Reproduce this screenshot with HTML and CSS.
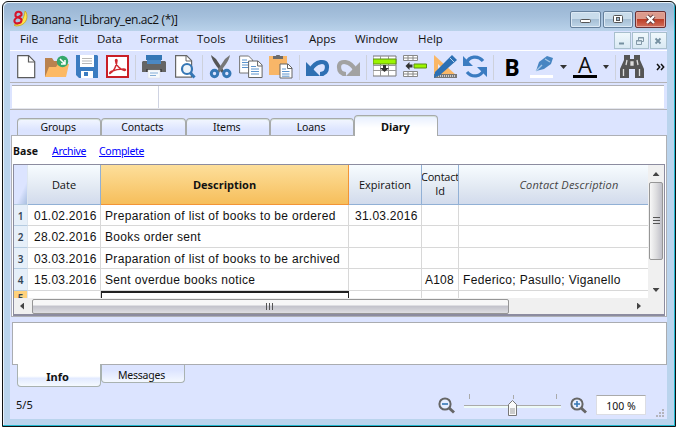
FILE: index.html
```html
<!DOCTYPE html>
<html lang="en">
<head>
<meta charset="utf-8">
<title>Banana - [Library_en.ac2 (*)]</title>
<link rel="stylesheet" href="styles.css">
</head>
<body>
<div class="window">
  <header class="titlebar">
    <svg class="logo" width="16" height="17" viewBox="0 0 16 17"><path d="M13 1l1 1c3 7-1 14-10 14l-2-1c7-1 10-6 11-14z" fill="#ffe34a" stroke="#c9a21c" stroke-width=".8"/><path d="M3.500 6c-1-6 7-5 6-1-1 2-6 2-7 5-1 5 7 4 7 0 0-3-5-2-6-4z" fill="none" stroke="#d5132b" stroke-width="2.1"/></svg>
    <span class="caption">Banana - [Library_en.ac2 (*)]</span>
    <div class="winbtns">
      <span class="wb"><svg width="29" height="15"><rect x="9.500" y="7.500" width="10" height="3" rx="1" fill="#fff" stroke="#555"/></svg></span>
      <span class="wb"><svg width="28" height="15"><rect x="9.500" y="3.500" width="9" height="7" rx="1" fill="#fff" stroke="#555"/><rect x="12.500" y="5.500" width="3" height="3" fill="#9db8cf" stroke="#555"/></svg></span>
      <span class="wb close"><svg width="29" height="15"><path d="M11 4l7 7M18 4l-7 7" stroke="#623a3a" stroke-width="4"/><path d="M11 4l7 7M18 4l-7 7" stroke="#fff" stroke-width="2.400"/></svg></span>
    </div>
  </header>
  <main class="client">
    <nav class="menubar">
      <span class="m1">File</span><span class="m2">Edit</span><span class="m3">Data</span><span class="m4">Format</span><span class="m5">Tools</span><span class="m6">Utilities1</span><span class="m7">Apps</span><span class="m8">Window</span><span class="m9">Help</span>
      <div class="mdi">
        <span><svg width="14" height="16"><path d="M4 10.500h5" stroke="#7590a0" stroke-width="2"/></svg></span>
        <span><svg width="14" height="16"><path d="M5.500 7V4.500h5v4H9M3.500 7.500h5v4h-5zM3 8h6M5 5h6" fill="none" stroke="#8399a8"/></svg></span>
        <span><svg width="14" height="16"><path d="M4.500 5.500l5 5M9.500 5.500l-5 5" stroke="#7590a0" stroke-width="1.800"/></svg></span>
      </div>
    </nav>
    <div class="toolbar">
      <svg viewBox="0 0 24 24"><path d="M2.700.7h11l6 6v16h-17z" fill="#fff" stroke="#5b5b5b" stroke-width="1.200"/><path d="M13.500 1v6h6" fill="none" stroke="#5b5b5b" stroke-width="1.200"/></svg>
      <svg viewBox="0 0 24 24"><path d="M0 3h7l2 3h11v16H0z" fill="#b9824f"/><path d="M4 12h7l2-3h11l-3 13H0z" fill="#fcb964"/><circle cx="17.500" cy="6.500" r="5.700" fill="#35a86c"/><path d="M15 4l4.500 4.500M20 5v4h-4" stroke="#fff" stroke-width="1.500" fill="none"/></svg>
      <svg viewBox="0 0 24 24"><path d="M1 0h21l1 1v22H4l-3-3z" fill="#3b7cc1"/><path d="M5 0h14v12H5z" fill="#fff"/><path d="M7 3.500h10M7 6h10M7 8.500h10" stroke="#b7b7b7"/><path d="M6 16h12v7H6z" fill="#fff"/><path d="M9 17h4v4H9z" fill="#3b7cc1"/></svg>
      <svg viewBox="0 0 24 24"><path d="M2 1h21v21H2z" fill="#fff" stroke="#c91f26" stroke-width="2"/><path d="M5 18.500c3-1 7-8 7-13 0-1.500-1.500-1.500-1.500 0 0 5 5 9 9 10 1.500 0 1.500-1.500-1-1.500-5 0-9 1-12.500 2.500-1.500 1-1.500 2.200-1 2" fill="none" stroke="#d02a30" stroke-width="1.500"/></svg>
      <i class="sep"></i>
      <svg viewBox="0 0 24 24"><path d="M4 0h16v5H4z" fill="#3577b5"/><path d="M1 6h22l1 1v10H0V7z" fill="#656565"/><path d="M5 5h14v4H5z" fill="#4b88c3"/><path d="M4 14h16v3H4z" fill="#444"/><path d="M6 15h12v8H6z" fill="#f5f9fd" stroke="#ddd" stroke-width=".5"/><path d="M8 18h8M8 20.500h6" stroke="#84add6"/></svg>
      <svg viewBox="0 0 24 24"><path d="M3.600.7h11l5 5v16.500h-16z" fill="#fff" stroke="#666" stroke-width="1.200"/><path d="M14 1v5h5" fill="none" stroke="#666"/><circle cx="15" cy="14" r="5" fill="#edf4fa" stroke="#3577b5" stroke-width="2.200"/><path d="M18.500 18l4 4.500" stroke="#3577b5" stroke-width="3"/></svg>
      <i class="sep"></i>
      <svg viewBox="0 0 24 24"><path d="M2 0l5 4 8 12-2 2C8 12 3 6 2 0z" fill="#555"/><path d="M21 0l-5 4-8 12 2 2C15 12 20 6 21 0z" fill="#777"/><circle cx="5.500" cy="18.500" r="3.200" fill="none" stroke="#3577b5" stroke-width="3"/><circle cx="17.800" cy="18.500" r="3.200" fill="none" stroke="#3577b5" stroke-width="3"/></svg>
      <svg viewBox="0 0 24 24"><path d="M.6 1h9l4 4v13H.6z" fill="#fff" stroke="#777"/><path d="M3 5h5M3 7.500h8M3 10h8M3 12.500h8" stroke="#5c94cd"/><path d="M9.600 6h9.500l4 4v12.500H9.600z" fill="#fff" stroke="#666"/><path d="M18.600 6v5H23" fill="none" stroke="#666"/><path d="M12 11.500h5M12 14h8M12 16.500h8M12 19h8" stroke="#5c94cd"/></svg>
      <svg viewBox="0 0 24 24"><path d="M0 1h18v19H0z" fill="#f8b668"/><path d="M4 1h3c0-2 4-2 4 0h3v3H4z" fill="#6b6b6b"/><path d="M11 9h8l4 4v10H11z" fill="#fff" stroke="#666"/><path d="M18.500 9v4.500H23" fill="none" stroke="#666"/><path d="M13 14h4M13 16.500h7.500M13 19h7.500M13 21.200h7.500" stroke="#5c94cd"/></svg>
      <i class="sep"></i>
      <svg viewBox="0 0 24 24"><path d="M0 7v14h14z" fill="#2f70b3"/><path d="M5 15C9 6 21 4 21 12c0 4-2 7-7 7" fill="none" stroke="#2f70b3" stroke-width="4.200"/></svg>
      <svg viewBox="0 0 24 24"><path d="M24 7v14H10z" fill="#a2a2a2"/><path d="M19 15C15 6 3 4 3 12c0 4 2 7 7 7" fill="none" stroke="#a2a2a2" stroke-width="4.200"/></svg>
      <i class="sep"></i>
      <svg viewBox="0 0 24 24"><path d="M0 1h23v20H0z" fill="#fff" stroke="#777"/><path d="M7.500 1v20M15.500 1v20M0 15.500h23M0 10.500h23" stroke="#999"/><path d="M0 4h23v5H0z" fill="#9bf500" stroke="#5c8e19"/><path d="M10 10h3v3h3l-4.500 4L7 13h3z" fill="#333"/></svg>
      <svg viewBox="0 0 24 24"><path d="M.5.500h14v5H.5zM.500 16.500h14v5H.500zM5 0v6M10 0v6M0 3h15M5 16v6M10 16v6M0 19h15" fill="#fff" stroke="#888"/><path d="M11 9h12.500v4H11z" fill="#9bf500" stroke="#5c8e19"/><path d="M2.500 11l4-4v2.500h3v3h-3V15z" fill="#333"/></svg>
      <svg viewBox="0 0 24 24"><path d="M1 0l22 20H1z" fill="#fab766"/><path d="M5 9l7 7H5z" fill="#e7e8f5"/><path d="M1 19h23v4H1z" fill="#777"/><path d="M3 21h20" stroke="#ccc" stroke-dasharray="1 1" stroke-width="2"/><path d="M19 0l5 5L7 20l-6 3 1-6z" fill="#2c70b4"/><path d="M17 3l4 4" stroke="#bcd5f0"/></svg>
      <svg viewBox="0 0 24 24"><path d="M3.500 8C6 1 15 0 20 6M20.500 15C18 22 9 23 4 17" fill="none" stroke="#3b7cc1" stroke-width="3.200"/><path d="M0 1v10h10zM24 22V12H14z" fill="#3b7cc1"/></svg>
      <i class="sep"></i>
      <b class="bold">B</b>
      <svg viewBox="0 0 24 24"><path d="M6 16l3-9 8-6 6 2-2 6-7 5z" fill="#4785c2"/><path d="M15 4l5 3M6 16l6-6" stroke="#a6c7e6" stroke-width="1.400"/><path d="M0 20h23v3H0z" fill="#fff"/></svg>
      <i class="arrow"></i>
      <span class="fontcolor">A</span>
      <i class="arrow a2"></i>
      <i class="sep"></i>
      <svg class="bino" viewBox="0 0 24 24"><path d="M4 0h6v4h4V0h6v5l4 9v9h-9v-9H9v9H0v-9l4-9z" fill="#555"/><path d="M7 5L6 10M17 5l1 5M3.500 14v7M19.500 14v7M11 7h2v3h-2z" stroke="#ddd" stroke-width="1.300" fill="#ddd"/></svg>
      <svg class="more" viewBox="0 0 9 8"><path d="M1 1l2.700 3L1 7M5 1l2.700 3L5 7" fill="none" stroke="#111" stroke-width="1.500"/></svg>
    </div>
    <div class="formula"><span></span><span></span></div>
    <div class="tabs"><span>Groups</span><span>Contacts</span><span>Items</span><span>Loans</span><span class="active">Diary</span></div>
    <section class="panel">
      <div class="views"><b>Base</b><u class="archive">Archive</u><u class="complete">Complete</u></div>
      <div class="frame">
        <div class="grid">
          <div class="row head"><i></i><span>Date</span><span class="sel">Description</span><span>Expiration</span><span class="cid">Contact<br>Id</span><span class="cdesc">Contact Description</span></div>
          <div class="row"><i>1</i><span class="date">01.02.2016</span><span>Preparation of list of books to be ordered</span><span class="date">31.03.2016</span><span></span><span></span></div>
          <div class="row"><i>2</i><span class="date">28.02.2016</span><span>Books order sent</span><span></span><span></span><span></span></div>
          <div class="row"><i>3</i><span class="date">03.03.2016</span><span>Praparation of list of books to be archived</span><span></span><span></span><span></span></div>
          <div class="row"><i>4</i><span class="date">15.03.2016</span><span>Sent overdue books notice</span><span></span><span class="acc">A108</span><span class="names">Federico; Pasullo; Viganello</span></div>
          <div class="row last"><i>5</i><span></span><span class="cursor"></span><span></span><span></span><span></span></div>
        </div>
        <div class="vscroll"><i class="up"></i><div class="thumb"><svg width="7" height="8"><path d="M0 .5h7M0 3.500h7M0 6.500h7" stroke="#555"/></svg></div><i class="down"></i></div>
        <div class="hscroll"><i class="left"></i><div class="thumb"><svg width="8" height="7"><path d="M.5 0v7M3.500 0v7M6.500 0v7" stroke="#555"/></svg></div><i class="right"></i></div>
      </div>
    </section>
    <div class="info"></div>
    <div class="btabs"><span class="on">Info</span><span>Messages</span></div>
    <footer class="status">
      <span class="count">5/5</span>
      <svg class="mag" viewBox="0 0 17 17"><path d="M10 10l6 5.500" stroke="#666" stroke-width="3"/><circle cx="7" cy="7" r="5.600" fill="#e8efff" stroke="#666" stroke-width="2"/><path d="M4 7h6" stroke="#3577b5" stroke-width="1.600"/></svg>
      <svg class="slider" width="98" height="24" viewBox="0 0 98 24"><path d="M5.500 1v5M49.500 2v4M92.500 1v5" stroke="#aaa"/><path d="M0 12.500h97" stroke="#aaa"/><path d="M0 14h97" stroke="#eefaf7" stroke-width="2"/><path d="M44.500 22.500v-11l4-4 4 4v11z" fill="#fafafa" stroke="#777"/><path d="M46 15h5v6h-5z" fill="#ccc"/></svg>
      <svg class="mag plus" viewBox="0 0 17 17"><path d="M10 10l6 5.500" stroke="#666" stroke-width="3"/><circle cx="7" cy="7" r="5.600" fill="#e8efff" stroke="#666" stroke-width="2"/><path d="M4 7h6M7 4v6" stroke="#3577b5" stroke-width="1.600"/></svg>
      <span class="pct">100 %</span>
      <svg class="grip" width="8" height="8"><path d="M6 1h2M3 4h2M6 4h2M0 7h2M3 7h2M6 7h2" stroke="#b4b4bc" stroke-width="2"/></svg>
    </footer>
  </main>
</div>
</body>
</html>
```
FILE: styles.css
```css
* { box-sizing: border-box; }
body { margin: 0; width: 676px; height: 429px; overflow: hidden; background: #fff; font: 11px "Noto Sans", sans-serif; color: #111; }
svg { display: block; flex: none; }
i { font-style: normal; }
.window { margin: 1px 0 0 2px; width: 674px; height: 426px; border: 1px solid #111; border-radius: 6px 6px 0 0; background: #bad4ed; box-shadow: inset -1px -1px #22b8cf, inset 1px 1px #e8f2fa; padding: 1px 7px 7px; }
.titlebar { height: 28px; margin: 0 -6px 0 -6px; padding: 0 8px 0 6px; display: flex; background: linear-gradient(#98b4d2, #a5c0dc 50%, #b9d2ea); border-radius: 5px 5px 0 0; }
.logo { margin: 7px 3px 0 2px; }
.caption { margin-top: 9px; font: 12px/16px "Open Sans", sans-serif; white-space: nowrap; letter-spacing: -.4px; }
.winbtns { margin: 8px 0 0 auto; display: flex; gap: 2px; height: 17px; }
.wb { border: 1px solid #65809c; border-radius: 2px; background: linear-gradient(#c9dceb 45%, #a6bfd5 50%, #bed5e8); box-shadow: inset 0 0 0 1px #dce9f5; }
.wb.close { background: linear-gradient(#dc9a8c 45%, #bd3f28 50%, #d1705c); border-color: #6b3034; box-shadow: inset 0 0 0 1px #e5a59a; }
.client { background: #dce4ff; width: 657px; height: 388px; display: flex; flex-direction: column; }
.menubar { height: 20px; border-bottom: 1px solid #fff; display: flex; padding-left: 10px; flex: none; font: 11.5px/16px "Open Sans", sans-serif; white-space: nowrap; }
.menubar > span { flex: none; letter-spacing: 0; }
.m1 { width: 38px; } .m2 { width: 39px; } .m3 { width: 43px; } .m4 { width: 57px; } .m5 { width: 48px; } .m6 { width: 64px; } .m7 { width: 46px; } .m8 { width: 63px; }
.menubar > .m6 { letter-spacing: -.2px; } .menubar > .m8 { letter-spacing: -.1px; }
.mdi { display: flex; gap: 1px; margin: 1px 0 0 auto; }
.mdi span { width: 17px; height: 17px; border: 1px solid #a8bfcd; background: linear-gradient(#f0f8fc, #d9e9f3); }
.toolbar { height: 32px; flex: none; display: flex; gap: 6px; padding: 4px 0 0 5px; border-bottom: 1px solid #b2b2b6; }
.toolbar svg { width: 24px; height: 24px; }
.sep { width: 1px; height: 25px; background: #cdd1dc; }
.bold { width: 24px; text-align: center; font: bold 23px/25px "Open Sans", sans-serif; color: #000; }
.arrow { width: 7px; height: 4px; margin-top: 10px; background: #333; clip-path: polygon(0 0, 100% 0, 50% 100%); }
.arrow.a2 { width: 6px; }
.fontcolor { width: 24px; height: 23px; border-bottom: 3px solid #000; text-align: center; font: 22px/19px "Open Sans", sans-serif; }
.toolbar .bino { margin-left: -2px; }
.toolbar .more { width: 9px; height: 8px; margin: 8px 0 0 6px; }
.formula { height: 24px; margin: 2px 3px 0 2px; border-top: 1px solid #b0b0b4; border-bottom: 1px solid #e4e6ee; display: flex; gap: 1px; background: #cfd3e2; flex: none; }
.formula span { background: #fff; width: 146px; }
.formula span + span { flex: 1; width: auto; }
.tabs { height: 26px; margin-top: 0; border-top: 1px solid #b4b4b8; display: flex; align-items: flex-end; padding-left: 7px; flex: none; }
.tabs span { width: 84.300px; height: 17px; border: 1px solid #a7aaa9; border-bottom: 0; border-radius: 4px 4px 0 0; background: linear-gradient(#f3f7ff, #dce4ff 70%); box-shadow: inset 0 1px #d4e0da; text-align: center; line-height: 17px; font-size: 10.500px; letter-spacing: -.1px; padding-right: 2px; }
.tabs .active { height: 21px; margin-bottom: -1px; background: linear-gradient(#e7efff, #fff 60%); font-weight: bold; line-height: 22px; position: relative; font-size: 11px; }
.panel { height: 182px; margin-left: 1px; border: 1px solid #aeb0b5; background: #fff; flex: none; }
.views { height: 28px; padding-left: 1px; display: flex; line-height: 30px; font-size: 10.500px; }
.views b { width: 39px; letter-spacing: .1px; }
.views u { color: #00f; letter-spacing: -.3px; }
.archive { width: 47px; }
.frame { width: 652px; height: 152px; margin-left: 1px; border: 1px solid #8c8ca0; border-bottom-width: 2px; display: grid; grid-template: 133px 16px / 634px 16px; }
.grid { overflow: hidden; }
.row { display: grid; grid-template-columns: 14px 73px 248px 73px 37px 189px; height: 21.600px; font: 12px/23px "Liberation Sans", sans-serif; }
.row > * { border-right: 1px solid #d8d8d8; border-bottom: 1px solid #d8d8d8; white-space: nowrap; overflow: hidden; }
.row > i { background: #e6eff9; border-color: #adc5df #dde6ef #b5cbe0 #b5cbe0; text-align: center; font: 600 10px/22px "Noto Sans", sans-serif; color: #345; }
.row > span { padding-left: 4px; letter-spacing: .33px; }
.row > :last-child { border-right: 0; }
.row .date { padding-left: 6px; letter-spacing: .25px; }
.row .acc { padding-left: 3px; letter-spacing: .2px; }
.head { height: 39.500px; }
.head > * { background: linear-gradient(#f7fcff, #e3eaf3 55%, #d2dbec); border-color: #91b0d5; }
.head > i { background: linear-gradient(115deg, #dce4ff 65%, #a9bfe0); }
.head > span { text-align: center; font: 11px/40px "Open Sans", sans-serif; padding: 0; letter-spacing: 0; }
.head > .sel { font-weight: bold; background: linear-gradient(#fddf9b, #f6be5b); border-color: #f29436; letter-spacing: 0; }
.head > .cid { line-height: 14px; padding-top: 5px; display: flex; justify-content: center; text-align: center; letter-spacing: -.2px; }
.head > .cdesc { font-style: italic; padding-left: 31px; color: #444; letter-spacing: .2px; }
.last > i { background: #ffd27c; line-height: 14px; }
.last > .cursor { border: 1px solid #222; border-width: 2px 1px 0; }
.vscroll, .hscroll { background: #f0f0f0; display: flex; align-items: center; }
.vscroll { flex-direction: column; }
.hscroll { grid-column: 1 / 3; }
.vscroll .thumb { width: 14px; height: 78px; margin-top: 6px; border: 1px solid #969696; border-radius: 2px; background: linear-gradient(90deg, #f7f7f7, #dedee0 50%, #bfbfc8); display: grid; place-items: center; }
.hscroll .thumb { width: 477px; height: 15px; margin-left: 8px; border: 1px solid #969696; border-radius: 2px; background: linear-gradient(#f7f7f7 35%, #c4c4cc 50%, #dedee2); padding: 3px 0 0 233px; }
.up { width: 7px; height: 4px; margin-top: 7px; background: #444; clip-path: polygon(50% 0, 100% 100%, 0 100%); }
.down { width: 7px; height: 4px; margin-top: 28px; background: #444; clip-path: polygon(0 0, 100% 0, 50% 100%); }
.left { width: 4px; height: 7px; margin-left: 6px; background: #444; clip-path: polygon(0 50%, 100% 0, 100% 100%); }
.right { width: 4px; height: 7px; margin-left: 128px; background: #444; clip-path: polygon(0 0, 100% 50%, 0 100%); }
.info { height: 43px; margin: 5px 0 0 2px; border: 1px solid #aaacb0; background: #fff; flex: none; }
.btabs { display: flex; align-items: flex-start; padding-left: 7px; height: 23px; flex: none; }
.btabs span { width: 84px; height: 18px; border: 1px solid #a9b2b0; border-top: 0; border-radius: 0 0 4px 4px; text-align: center; line-height: 20px; font-size: 10.500px; letter-spacing: -.2px; padding-right: 3px; background: linear-gradient(#dce4ff 30%, #f4f8ff); }
.btabs .on { height: 23px; margin-top: -1px; background: linear-gradient(#fff 55%, #e2eaff 65%, #f5faff); font-weight: bold; line-height: 26px; position: relative; font-size: 11px; letter-spacing: 0; }
.status { display: flex; align-items: flex-start; padding: 5px 3px 0 6px; flex: 1; }
.count { width: 422px; line-height: 23px; font-size: 11px; }
.mag { width: 17px; height: 17px; margin-top: 4px; }
.slider { margin: 0 8px 0 9px; }
.pct { width: 50px; height: 20px; margin: 2px 0 0 9px; background: #fff; border: 1px solid #dcdde3; border-top-color: #aaa; text-align: center; font-size: 10.500px; line-height: 20px; }
.grip { margin: 16px 0 0 auto; }
```
